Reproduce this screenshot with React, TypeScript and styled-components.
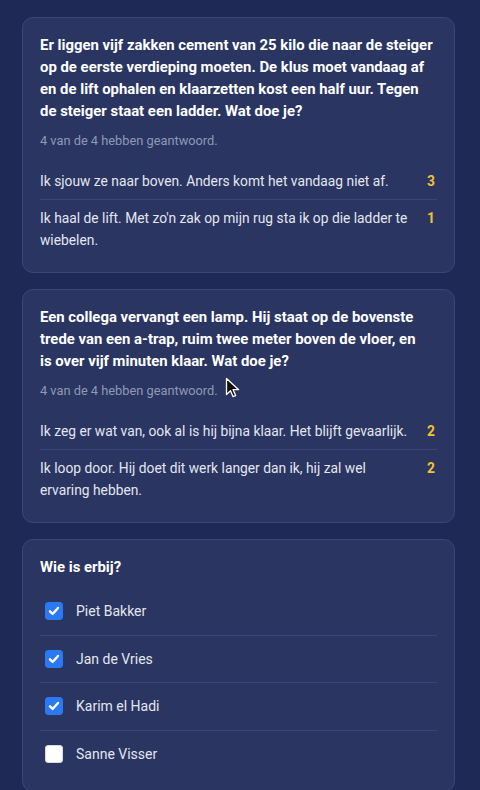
import React, {FC, useState} from 'react'
import styled, {createGlobalStyle} from 'styled-components'

const GlobalStyle = createGlobalStyle`
  html, body {
    margin: 0;
    padding: 0;
    background: #1e2956;
    font-family: Roboto, "Noto Sans", "Liberation Sans", sans-serif;
    -webkit-font-smoothing: antialiased;
  }
`;

const Page = styled.div`
  position: relative;
  display: flex;
  flex-direction: column;
  gap: 16px;
  padding: 17px 25px 0 22px;
  min-height: 790px;
  box-sizing: border-box;
`;

const Card = styled.section`
  background: #2a3562;
  border: 1px solid #3a4674;
  border-radius: 11px;
  padding: 16px 17px 14px 17px;
`;

const Question = styled.h2`
  margin: 0;
  font-size: 14.9px;
  line-height: 22px;
  font-weight: 700;
  color: #ffffff;
`;

const Meta = styled.p`
  margin: 10px 0 0;
  font-size: 12.8px;
  line-height: 18px;
  color: #8f98b6;
`;

const OptionList = styled.ul`
  list-style: none;
  margin: 13px 0 0;
  padding: 0;
`;

const Option = styled.li`
  display: flex;
  align-items: flex-start;
  gap: 10px;
  padding: 7px 0;
  font-size: 13.8px;
  line-height: 22px;
  color: #e3e6ef;

  & + & {
    border-top: 1px solid #3a4674;
  }
`;

const OptionText = styled.span`
  flex: 1;
`;

const Count = styled.span`
  font-weight: 700;
  color: #f2c233;
  min-width: 8px;
  text-align: right;
  padding-right: 2px;
`;

const Title = styled.h3`
  margin: 0;
  font-size: 14.9px;
  line-height: 22px;
  font-weight: 700;
  color: #ffffff;
`;

const PeopleList = styled.ul`
  list-style: none;
  margin: 10px 0 0;
  padding: 0;
`;

const Person = styled.li`
  display: flex;
  align-items: center;
  gap: 13px;
  padding: 12.25px 0 12.25px 5px;
  font-size: 14px;
  line-height: 22px;
  color: #e3e6ef;
  cursor: pointer;

  & + & {
    border-top: 1px solid #3a4674;
  }
`;

const Box = styled.span<{ $checked: boolean }>`
  width: 18px;
  height: 18px;
  border-radius: 3px;
  box-sizing: border-box;
  display: grid;
  place-items: center;
  background: ${p => p.$checked ? '#2a78f2' : '#ffffff'};
  border: 1px solid ${p => p.$checked ? '#2a78f2' : '#d7dbe4'};
`;

const Cursor = styled.svg`
  position: absolute;
  left: 225px;
  top: 377px;
  pointer-events: none;
`;

interface Answer {
    text: string;
    count: number;
}

interface Poll {
    question: string;
    answered: string;
    answers: Answer[];
}

const polls: Poll[] = [
    {
        question: 'Er liggen vijf zakken cement van 25 kilo die naar de steiger op de eerste verdieping moeten. De klus moet vandaag af en de lift ophalen en klaarzetten kost een half uur. Tegen de steiger staat een ladder. Wat doe je?',
        answered: '4 van de 4 hebben geantwoord.',
        answers: [
            {text: 'Ik sjouw ze naar boven. Anders komt het vandaag niet af.', count: 3},
            {text: "Ik haal de lift. Met zo'n zak op mijn rug sta ik op die ladder te wiebelen.", count: 1},
        ],
    },
    {
        // keep "is over" together so the line breaks like the original
        question: 'Een collega vervangt een lamp. Hij staat op de bovenste trede van een a-trap, ruim twee meter boven de vloer, en is\u00a0over vijf minuten klaar. Wat doe je?',
        answered: '4 van de 4 hebben geantwoord.',
        answers: [
            {text: 'Ik zeg er wat van, ook al is hij bijna klaar. Het blijft gevaarlijk.', count: 2},
            {text: 'Ik loop door. Hij doet dit werk langer dan ik, hij zal wel ervaring hebben.', count: 2},
        ],
    },
];

const initialPeople = [
    {name: 'Piet Bakker', present: true},
    {name: 'Jan de Vries', present: true},
    {name: 'Karim el Hadi', present: true},
    {name: 'Sanne Visser', present: false},
];

const PollCard: FC<{ poll: Poll }> = ({poll}) => (
    <Card>
        <Question>{poll.question}</Question>
        <Meta>{poll.answered}</Meta>
        <OptionList>
            {poll.answers.map(a => (
                <Option key={a.text}>
                    <OptionText>{a.text}</OptionText>
                    <Count>{a.count}</Count>
                </Option>
            ))}
        </OptionList>
    </Card>
);

export default function App() {
    const [people, setPeople] = useState(initialPeople);

    const toggle = (name: string) =>
        setPeople(people.map(p => p.name === name ? {...p, present: !p.present} : p));

    return (
        <>
            <GlobalStyle/>
            <Page>
                {polls.map(p => <PollCard key={p.question} poll={p}/>)}

                <Card>
                    <Title>Wie is erbij?</Title>
                    <PeopleList>
                        {people.map(p => (
                            <Person key={p.name} onClick={() => toggle(p.name)}>
                                <Box $checked={p.present}>
                                    {p.present && (
                                        <svg width="12" height="12" viewBox="0 0 12 12">
                                            <path d="M2 6.3l2.6 2.7L10 3" fill="none" stroke="#fff"
                                                  strokeWidth="2.4" strokeLinecap="round" strokeLinejoin="round"/>
                                        </svg>
                                    )}
                                </Box>
                                {p.name}
                            </Person>
                        ))}
                    </PeopleList>
                </Card>

                {/* mouse pointer that was in the screenshot */}
                <Cursor width="16" height="22" viewBox="0 0 16 22">
                    <path d="M1.5 1.5v16l4-3.8 2.6 6 2.6-1.1-2.6-5.9h5.6z" fill="#111" stroke="#fff"
                          strokeWidth="1.3" strokeLinejoin="round"/>
                </Cursor>
            </Page>
        </>
    );
}
